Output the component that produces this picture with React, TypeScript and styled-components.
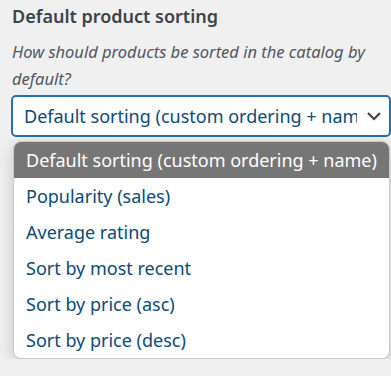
import React from "react";
import styled, {createGlobalStyle} from "styled-components";

const GlobalStyle = createGlobalStyle`
  html, body {
    margin: 0;
    background: #f0f0f1;
    font-family: "Noto Sans", "Open Sans", sans-serif;
    overflow: hidden;
  }
`;

const options = [
    "Default sorting (custom ordering + name)",
    "Popularity (sales)",
    "Average rating",
    "Sort by most recent",
    "Sort by price (asc)",
    "Sort by price (desc)",
];

const Field = styled.div`
    display: flex;
    flex-direction: column;
    padding: 4px 0 0 11px;
    width: 392px;
`;

const Heading = styled.div`
    font-size: 18px;
    font-weight: 600;
    color: #3c434a;
    line-height: 24px;
    padding-left: 1px;
`;

const Description = styled.div`
    margin-top: 10px;
    font-style: italic;
    font-size: 16.5px;
    line-height: 27px;
    color: #50575e;
    padding-left: 1px;
    width: 378px;
`;

const Select = styled.div`
    margin-top: 3px;
    height: 42px;
    box-sizing: border-box;
    border: 2px solid #2271b1;
    border-radius: 5px;
    background: #fff;
    display: flex;
    align-items: center;
    justify-content: space-between;
    padding: 0 7px 0 11px;
    color: #0a4b78;
    font-size: 18px;
    width: 380px;

    .value {
      white-space: nowrap;
      overflow: hidden;
      width: 333px;
    }
`;

const List = styled.ul`
    list-style: none;
    margin: 4px 0 0 2px;
    padding: 0;
    width: 375px;
    background: #fff;
    border-radius: 8px;
    overflow: hidden;
    border: 1px solid #c8c8c8;
    box-shadow: 0 4px 16px rgba(0, 0, 0, 0.18);
`;

const Option = styled.li<{ $selected?: boolean }>`
    height: 36px;
    display: flex;
    align-items: center;
    padding-left: 12px;
    font-size: 18px;
    white-space: nowrap;
    color: ${({$selected}) => ($selected ? "#fff" : "#0a4b78")};
    background: ${({$selected}) => ($selected ? "#767676" : "transparent")};
`;

const Chevron = () => (
    <svg width="16" height="10" viewBox="0 0 16 10" fill="none">
        <path d="M2 2l6 6 6-6" stroke="#3c434a" strokeWidth="2.2" />
    </svg>
);

export default function App() {
    return (
        <>
            <GlobalStyle/>
            <Field>
                <Heading>Default product sorting</Heading>
                <Description>How should products be sorted in the catalog by default?</Description>
                <Select>
                    <span className="value">{options[0]}</span>
                    <Chevron/>
                </Select>
                <List>
                    {options.map((o, i) => (
                        <Option key={o} $selected={i === 0}>{o}</Option>
                    ))}
                </List>
            </Field>
        </>
    );
}
